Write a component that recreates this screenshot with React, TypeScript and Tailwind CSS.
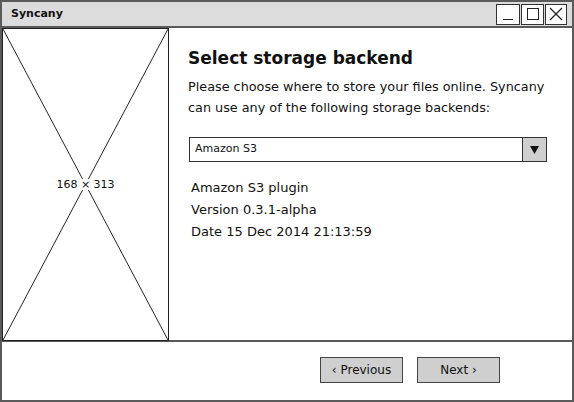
import React from "react";

const font = { fontFamily: '"DejaVu Sans", "Open Sans", sans-serif' };

function Placeholder() {
  return (
    <div className="relative w-[167px] h-[313px] border border-[#222] bg-white shrink-0">
      <svg className="absolute inset-0 w-full h-full" viewBox="0 0 167 313" preserveAspectRatio="none">
        <line x1="0" y1="0" x2="167" y2="313" stroke="#222" strokeWidth="1" />
        <line x1="167" y1="0" x2="0" y2="313" stroke="#222" strokeWidth="1" />
      </svg>
      <div className="absolute inset-0 flex items-center justify-center">
        <span className="bg-white px-[2px] text-[11px] text-[#111] leading-none">168 × 313</span>
      </div>
    </div>
  );
}

export default function App() {
  return (
    <div className="w-[574px] h-[402px] bg-white text-[#111]" style={font}>
      <div className="w-full h-full flex flex-col border-2 border-[#5a5a5a]">
        <div className="h-[26px] bg-[#dcdcdc] border-b-2 border-[#5a5a5a] flex items-center pl-[9px] pr-[5px] shrink-0">
          <span className="text-[11px] font-bold flex-1">Syncany</span>
          <div className="flex gap-[1px]">
            <div className="w-[24px] h-[21px] bg-white border border-[#333] flex items-end justify-center pb-[4px]">
              <div className="w-[10px] h-[1px] bg-[#222]" />
            </div>
            <div className="w-[23px] h-[21px] bg-white border border-[#333] flex items-center justify-center">
              <div className="w-[12px] h-[12px] border border-[#222]" />
            </div>
            <div className="w-[22px] h-[21px] bg-white border border-[#333] flex items-center justify-center">
              <svg width="14" height="14" viewBox="0 0 14 14">
                <line x1="1" y1="1" x2="13" y2="13" stroke="#222" strokeWidth="1.2" />
                <line x1="13" y1="1" x2="1" y2="13" stroke="#222" strokeWidth="1.2" />
              </svg>
            </div>
          </div>
        </div>
        <div className="flex h-[314px] border-b-2 border-[#5a5a5a] shrink-0">
          <Placeholder />
          <div className="flex-1 pl-[19px] pt-[18px]">
            <h1 className="text-[17px] font-bold leading-[24px]">Select storage backend</h1>
            <p className="mt-[6px] text-[12.8px] leading-[21px] whitespace-nowrap">
              Please choose where to store your files online. Syncany
              <br />
              can use any of the following storage backends:
            </p>
            <div className="mt-[19px] ml-[1px] w-[358px] h-[25px] flex border border-[#333] bg-white">
              <div className="flex-1 flex items-center pl-[5px] text-[11px]">Amazon S3</div>
              <div className="w-[24px] bg-[#cfcfcf] border-l border-[#333] flex items-center justify-center">
                <svg width="9" height="8" viewBox="0 0 9 8">
                  <polygon points="0,0 9,0 4.5,8" fill="#111" />
                </svg>
              </div>
            </div>
            <div className="mt-[15px] pl-[3px] text-[13px] leading-[22px]">
              <div>Amazon S3 plugin</div>
              <div>Version 0.3.1-alpha</div>
              <div>Date 15 Dec 2014 21:13:59</div>
            </div>
          </div>
        </div>
        <div className="flex-1 flex justify-end items-start pt-[15px] pr-[72px] gap-[14px]">
          <button className="w-[83px] h-[26px] bg-[#cfcfcf] border border-[#444] text-[12px]">‹ Previous</button>
          <button className="w-[83px] h-[26px] bg-[#cfcfcf] border border-[#444] text-[12px]">Next ›</button>
        </div>
      </div>
    </div>
  );
}
